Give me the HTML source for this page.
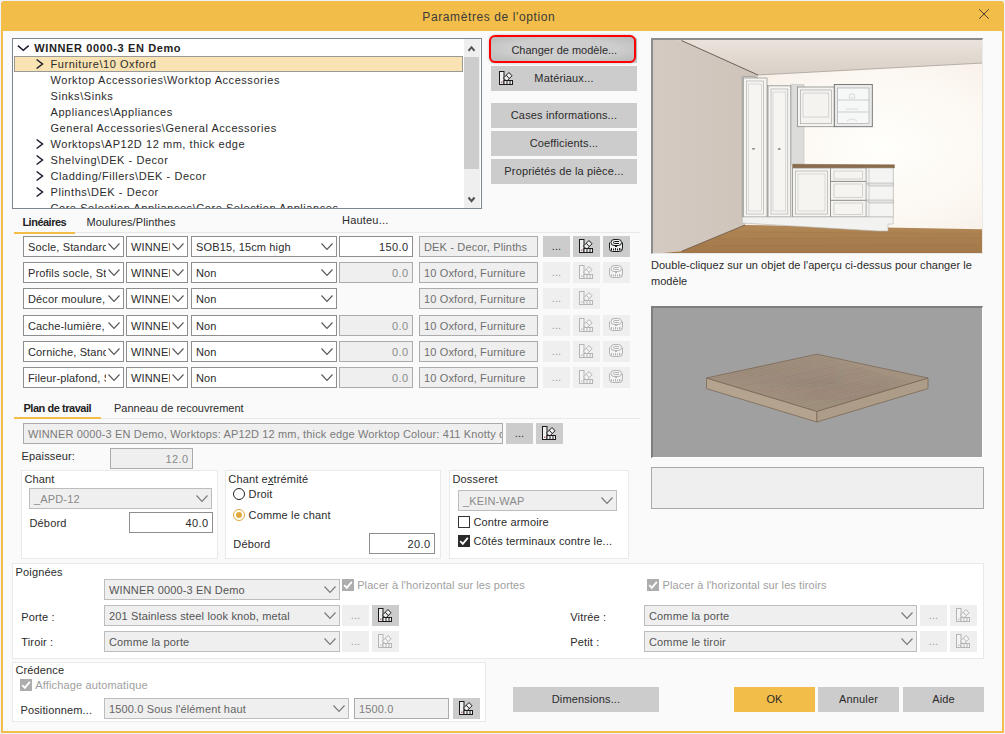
<!DOCTYPE html>
<html><head><meta charset="utf-8"><style>
html,body{margin:0;padding:0;}
body{width:1005px;height:734px;position:relative;overflow:hidden;background:#EFF2FA;font-family:"Liberation Sans",sans-serif;}
.a{position:absolute;box-sizing:border-box;}
.t{position:absolute;white-space:nowrap;}
svg.a{overflow:visible}
</style></head><body>
<div class="a" style="left:1px;top:1px;width:1003px;height:732px;background:#F3BD49;border-radius:3px 3px 0 0;"></div>
<div class="a" style="left:3px;top:31px;width:999px;height:700px;background:#FAFAFA;"></div>
<div class="t" style="left:188.8px;width:600px;text-align:center;top:11.04px;font-size:12px;line-height:12px;color:#3a3a3a;font-weight:400;letter-spacing:0.6px;">Param&egrave;tres de l'option</div>
<svg class="a" style="left:978px;top:8px" width="12" height="12"><path d="M1.2 1.2 L10.8 10.8 M10.8 1.2 L1.2 10.8" stroke="#3b3030" stroke-width="0.9"/></svg>
<div class="a" style="left:12px;top:38px;width:470px;height:171px;background:#FFFFFF;border:1px solid #7D8590;"></div>
<div class="a" style="left:13px;top:39px;width:451px;height:169px;overflow:hidden">
</div>
<div class="a" style="left:14px;top:56px;width:449px;height:16px;background:#FAE3B2;border:1px solid #999999;"></div>
<svg class="a" style="left:17px;top:45px" width="13" height="7"><polyline points="0.9,0.6 6.3,5.2 11.7,0.6" fill="none" stroke="#1c1c2c" stroke-width="1.5"/></svg>
<div class="t" style="left:34.3px;top:43.19px;font-size:11px;line-height:11px;color:#222;font-weight:700;letter-spacing:0.62px;">WINNER 0000-3 EN Demo</div>
<svg class="a" style="left:36px;top:59px" width="9" height="11"><polyline points="0.6,0.5 6.5,5 0.6,9.5" fill="none" stroke="#1c1c2c" stroke-width="1.5"/></svg>
<div class="t" style="left:50.5px;top:59.19px;font-size:11px;line-height:11px;color:#2b2b2b;font-weight:400;letter-spacing:0.55px;">Furniture\10 Oxford</div>
<div class="t" style="left:50.5px;top:75.19px;font-size:11px;line-height:11px;color:#2b2b2b;font-weight:400;letter-spacing:0.55px;">Worktop Accessories\Worktop Accessories</div>
<div class="t" style="left:50.5px;top:91.19px;font-size:11px;line-height:11px;color:#2b2b2b;font-weight:400;letter-spacing:0.55px;">Sinks\Sinks</div>
<div class="t" style="left:50.5px;top:107.19px;font-size:11px;line-height:11px;color:#2b2b2b;font-weight:400;letter-spacing:0.55px;">Appliances\Appliances</div>
<div class="t" style="left:50.5px;top:123.19px;font-size:11px;line-height:11px;color:#2b2b2b;font-weight:400;letter-spacing:0.55px;">General Accessories\General Accessories</div>
<svg class="a" style="left:36px;top:139px" width="9" height="11"><polyline points="0.6,0.5 6.5,5 0.6,9.5" fill="none" stroke="#1c1c2c" stroke-width="1.5"/></svg>
<div class="t" style="left:50.5px;top:139.19px;font-size:11px;line-height:11px;color:#2b2b2b;font-weight:400;letter-spacing:0.55px;">Worktops\AP12D 12 mm, thick edge</div>
<svg class="a" style="left:36px;top:155px" width="9" height="11"><polyline points="0.6,0.5 6.5,5 0.6,9.5" fill="none" stroke="#1c1c2c" stroke-width="1.5"/></svg>
<div class="t" style="left:50.5px;top:155.19px;font-size:11px;line-height:11px;color:#2b2b2b;font-weight:400;letter-spacing:0.55px;">Shelving\DEK - Decor</div>
<svg class="a" style="left:36px;top:171px" width="9" height="11"><polyline points="0.6,0.5 6.5,5 0.6,9.5" fill="none" stroke="#1c1c2c" stroke-width="1.5"/></svg>
<div class="t" style="left:50.5px;top:171.19px;font-size:11px;line-height:11px;color:#2b2b2b;font-weight:400;letter-spacing:0.55px;">Cladding/Fillers\DEK - Decor</div>
<svg class="a" style="left:36px;top:187px" width="9" height="11"><polyline points="0.6,0.5 6.5,5 0.6,9.5" fill="none" stroke="#1c1c2c" stroke-width="1.5"/></svg>
<div class="t" style="left:50.5px;top:187.19px;font-size:11px;line-height:11px;color:#2b2b2b;font-weight:400;letter-spacing:0.55px;">Plinths\DEK - Decor</div>
<div class="a" style="left:13px;top:200px;width:450px;height:8px;overflow:hidden">
<div class="t" style="left:37.5px;top:2.69px;font-size:11px;line-height:11px;letter-spacing:0.55px;color:#2b2b2b">Core Selection Appliances\Core Selection Appliances</div></div>
<div class="a" style="left:464px;top:39px;width:16px;height:169px;background:#EFEFEF;"></div>
<div class="a" style="left:464px;top:57px;width:15px;height:112px;background:#CDCDCD;"></div>
<svg class="a" style="left:467px;top:45px" width="10" height="8"><polyline points="1.5,5.8 4.5,2.2 7.5,5.8" fill="none" stroke="#505050" stroke-width="2"/></svg>
<svg class="a" style="left:467px;top:196px" width="10" height="8"><polyline points="1.5,1.5 4.5,5.1 7.5,1.5" fill="none" stroke="#505050" stroke-width="2"/></svg>
<div class="a" style="left:491px;top:38px;width:146px;height:25px;background:#CCCCCC;"></div>
<div class="a" style="left:489px;top:35px;width:147px;height:28px;box-sizing:border-box;border:2px solid #FF0000;border-radius:6px;background:radial-gradient(ellipse at center,#CDCDCD 55%,#B9B9B9 100%);box-shadow:0 0 3px rgba(0,0,0,0.25)"></div>
<div class="t" style="left:264.29999999999995px;width:600px;text-align:center;top:45.49px;font-size:11px;line-height:11px;color:#2b2b2b;font-weight:400;">Changer de mod&egrave;le...</div>
<div class="a" style="left:491px;top:66px;width:146px;height:25px;background:#CCCCCC;"></div>
<div class="t" style="left:264.0px;width:600px;text-align:center;top:72.69px;font-size:11px;line-height:11px;color:#2b2b2b;font-weight:400;letter-spacing:0.15px;"></div>
<svg class="a" style="left:499px;top:71px" width="14" height="14" viewBox="0 0 14 14">
<rect x="0.5" y="0.5" width="4.5" height="13" fill="#eef0f2" stroke="#1a1a1a"/>
<rect x="2.2" y="10.6" width="1.2" height="1.2" fill="#a03030"/>
<polygon points="10,1.5 13,4.8 7.5,10.3 4.5,7" fill="#eef0f2" stroke="#1a1a1a"/>
<line x1="7.25" y1="4.25" x2="10.25" y2="7.55" stroke="#1a1a1a"/>
<rect x="5" y="9.5" width="8.5" height="4" fill="#eef0f2" stroke="#1a1a1a"/>
<line x1="8" y1="9.5" x2="8" y2="13.5" stroke="#1a1a1a"/>
<line x1="11" y1="9.5" x2="11" y2="13.5" stroke="#1a1a1a"/>
</svg>
<div class="t" style="left:264px;width:600px;text-align:center;top:73.19px;font-size:11px;line-height:11px;color:#2b2b2b;font-weight:400;letter-spacing:0.15px;">Mat&eacute;riaux...</div>
<div class="a" style="left:491px;top:103px;width:146px;height:25px;background:#CCCCCC;"></div>
<div class="t" style="left:264.0px;width:600px;text-align:center;top:109.69px;font-size:11px;line-height:11px;color:#2b2b2b;font-weight:400;letter-spacing:0.15px;">Cases informations...</div>
<div class="a" style="left:491px;top:131px;width:146px;height:25px;background:#CCCCCC;"></div>
<div class="t" style="left:264.0px;width:600px;text-align:center;top:137.69px;font-size:11px;line-height:11px;color:#2b2b2b;font-weight:400;letter-spacing:0.15px;">Coefficients...</div>
<div class="a" style="left:491px;top:159px;width:146px;height:25px;background:#CCCCCC;"></div>
<div class="t" style="left:264.0px;width:600px;text-align:center;top:165.69px;font-size:11px;line-height:11px;color:#2b2b2b;font-weight:400;letter-spacing:0.15px;">Propri&eacute;t&eacute;s de la pi&egrave;ce...</div>
<svg class="a" style="left:651px;top:38px" width="332" height="216" viewBox="0 0 332 216">
<defs>
<linearGradient id="lw" x1="0" y1="0" x2="1" y2="0"><stop offset="0" stop-color="#D3CAC2"/><stop offset="1" stop-color="#CFC4BA"/></linearGradient>
<radialGradient id="bw" cx="0.7" cy="0.5" r="0.7"><stop offset="0" stop-color="#FFFFFB"/><stop offset="0.5" stop-color="#FCF7F1"/><stop offset="1" stop-color="#F2E8DF"/></radialGradient>
<linearGradient id="cl" x1="0" y1="0" x2="0" y2="1"><stop offset="0" stop-color="#ECE4DC"/><stop offset="1" stop-color="#D8CFC7"/></linearGradient>
<linearGradient id="fl" x1="0" y1="0" x2="0" y2="1"><stop offset="0" stop-color="#B18755"/><stop offset="1" stop-color="#A27749"/></linearGradient>
</defs>
<rect x="0" y="0" width="332" height="216" fill="url(#bw)"/>
<polygon points="0,0 332,0 332,25 107,37" fill="url(#cl)"/>
<polygon points="0,0 30.5,2.5 107,37 94,187 30.5,213.3 0,216" fill="url(#lw)"/>
<line x1="30.5" y1="2.5" x2="107" y2="37" stroke="#5e544f" stroke-width="0.9"/>
<line x1="107" y1="37" x2="332" y2="25" stroke="#a89f98" stroke-width="0.8"/>
<polygon points="0,216 30.5,213.3 94,187 330,191.3 332,191.3 332,216" fill="url(#fl)"/>
<path d="M62 201 L330 200 M45 208 L330 207 M80 194 L330 196" stroke="#9a6f45" stroke-width="0.5" opacity="0.5"/>
<line x1="30.5" y1="213.3" x2="94" y2="187" stroke="#6f5a48" stroke-width="0.9"/>
<!-- side panel -->
<polygon points="139.8,46.5 153,46.5 153,126.3 139.8,126.3" fill="#DCDCDA" stroke="#b9b9b7" stroke-width="0.5"/>
<!-- tall units -->
<polygon points="91.3,38.7 103,38.7 117,47.8 117,179 91.3,179" fill="#F6F5F2" stroke="#8d8d8b" stroke-width="0.8"/>
<rect x="92.5" y="40" width="23.5" height="139" fill="#F6F5F2" stroke="#8d8d8b" stroke-width="0.7"/>
<rect x="95.5" y="43" width="17" height="133" fill="none" stroke="#a5a5a3" stroke-width="0.6"/>
<rect x="97.5" y="46" width="13" height="127" fill="none" stroke="#bdbdbb" stroke-width="0.5"/>
<rect x="117" y="47.8" width="22.8" height="131.2" fill="#F6F5F2" stroke="#8d8d8b" stroke-width="0.8"/>
<rect x="120" y="51" width="16.8" height="125" fill="none" stroke="#a5a5a3" stroke-width="0.6"/>
<rect x="122" y="54" width="12.8" height="119" fill="none" stroke="#bdbdbb" stroke-width="0.5"/>
<rect x="101" y="110" width="3" height="1.6" fill="#9a9a98"/>
<rect x="127" y="110" width="2.5" height="2" fill="#9a9a98"/>
<!-- wall units -->
<rect x="146.5" y="49" width="36.8" height="39.7" fill="#F4F3F0" stroke="#8a8a88" stroke-width="0.8"/>
<rect x="149.5" y="52" width="30.8" height="33.7" fill="none" stroke="#9d9d9b" stroke-width="0.6"/>
<rect x="152" y="55" width="25.8" height="24" fill="none" stroke="#b5b5b3" stroke-width="0.5"/>
<rect x="183.3" y="46.5" width="38" height="42.2" fill="#EAEBEB" stroke="#6e6e6e" stroke-width="0.9"/>
<rect x="186.5" y="50" width="31.5" height="35.5" fill="#F6F7F7" stroke="#a0a0a0" stroke-width="0.6"/>
<line x1="187" y1="62" x2="218" y2="62" stroke="#b8b8b8" stroke-width="0.7"/>
<line x1="187" y1="74" x2="218" y2="74" stroke="#b8b8b8" stroke-width="0.7"/>
<path d="M198 60 L204 60 L203 56 L199 56 Z M195 71 L207 71 M196 83 Q201 79 206 83" fill="none" stroke="#c8c8c8" stroke-width="0.6"/>
<!-- worktop -->
<polygon points="141.6,126.3 243.4,126.8 243.4,130 141.6,130" fill="#8E6C4A" stroke="#6d5238" stroke-width="0.4"/>
<!-- base units -->
<rect x="141.6" y="130" width="38" height="49" fill="#F5F4F1" stroke="#8a8a88" stroke-width="0.8"/>
<rect x="144.5" y="133" width="32" height="43" fill="none" stroke="#a0a09e" stroke-width="0.6"/>
<rect x="147" y="136" width="27" height="37" fill="none" stroke="#bdbdbb" stroke-width="0.5"/>
<rect x="179.6" y="130" width="35.6" height="49" fill="#F5F4F1" stroke="#8a8a88" stroke-width="0.8"/>
<line x1="179.6" y1="143.4" x2="215.2" y2="143.4" stroke="#8a8a88" stroke-width="1"/>
<line x1="179.6" y1="162.3" x2="215.2" y2="162.3" stroke="#8a8a88" stroke-width="1"/>
<rect x="183" y="133" width="28.5" height="8" fill="none" stroke="#b0b0ae" stroke-width="0.5"/>
<rect x="183" y="146" width="28.5" height="13.5" fill="none" stroke="#b0b0ae" stroke-width="0.5"/>
<rect x="183" y="165" width="28.5" height="11.5" fill="none" stroke="#b0b0ae" stroke-width="0.5"/>
<rect x="215.2" y="130" width="27" height="49" fill="#F4F4F2" stroke="#a5a5a3" stroke-width="0.6"/>
<polygon points="215.2,145 242.2,145 242.2,148 218,148" fill="#E4E4E2" stroke="#a5a5a3" stroke-width="0.5"/>
<polygon points="215.2,162 242.2,162 242.2,165 218,165" fill="#E4E4E2" stroke="#a5a5a3" stroke-width="0.5"/>
<line x1="218" y1="130" x2="218" y2="179" stroke="#b5b5b3" stroke-width="0.6"/>
<!-- plinth -->
<polygon points="91.3,179 242.2,179 242.2,186 237,186 237,193 227,193 91.3,185" fill="#F2F2F0" stroke="#b5b5b3" stroke-width="0.6"/>
</svg>
<div class="a" style="left:651px;top:38px;width:332px;height:216px;box-sizing:border-box;border-top:2px solid #8C8C8C;border-left:2px solid #8C8C8C;border-right:1px solid #E8E8E8;border-bottom:1px solid #E8E8E8;"></div>
<div class="t" style="left:651px;top:260.19px;font-size:11px;line-height:11px;color:#2b2b2b;font-weight:400;letter-spacing:0.03px;">Double-cliquez sur un objet de l'aper&ccedil;u ci-dessus pour changer le</div>
<div class="t" style="left:651px;top:275.79px;font-size:11px;line-height:11px;color:#2b2b2b;font-weight:400;letter-spacing:0.03px;">mod&egrave;le</div>
<div class="a" style="left:651px;top:306px;width:332px;height:152px;background:#A0A0A0;box-sizing:border-box;border-top:2px solid #7E7E7E;border-left:2px solid #7E7E7E;border-right:1px solid #FFFFFF;border-bottom:1px solid #FFFFFF;"></div>
<svg class="a" style="left:651px;top:306px" width="332" height="152" viewBox="651 306 332 152">
<defs><clipPath id="tp"><polygon points="706.5,378 816.9,354.2 928,378 816.9,411.3"/></clipPath></defs>
<polygon points="706.5,388.6 816.9,422 816.9,411.3 706.5,378" fill="#B4A38E" stroke="#7c6a58" stroke-width="0.8"/>
<polygon points="816.9,422 928,388.6 928,378 816.9,411.3" fill="#AD9C88" stroke="#7c6a58" stroke-width="0.8"/>
<polygon points="706.5,378 816.9,354.2 928,378 816.9,411.3" fill="#A39280" stroke="#7c6a58" stroke-width="0.8"/>
<g clip-path="url(#tp)"><line x1="706.5" y1="378.0" x2="818.0" y2="354.3" stroke="#7f6d5a" stroke-width="0.6" opacity="0.21"/>
<line x1="710.9" y1="379.3" x2="822.4" y2="355.6" stroke="#7f6d5a" stroke-width="0.6" opacity="0.29"/>
<line x1="715.3" y1="380.7" x2="826.8" y2="357.0" stroke="#7f6d5a" stroke-width="0.6" opacity="0.24"/>
<line x1="719.7" y1="382.0" x2="831.2" y2="358.3" stroke="#7f6d5a" stroke-width="0.6" opacity="0.30"/>
<line x1="724.2" y1="383.3" x2="835.7" y2="359.6" stroke="#7f6d5a" stroke-width="0.6" opacity="0.31"/>
<line x1="728.6" y1="384.7" x2="840.1" y2="361.0" stroke="#7f6d5a" stroke-width="0.6" opacity="0.17"/>
<line x1="733.0" y1="386.0" x2="844.5" y2="362.3" stroke="#7f6d5a" stroke-width="0.6" opacity="0.15"/>
<line x1="737.4" y1="387.3" x2="848.9" y2="363.6" stroke="#7f6d5a" stroke-width="0.6" opacity="0.36"/>
<line x1="741.8" y1="388.7" x2="853.3" y2="365.0" stroke="#7f6d5a" stroke-width="0.6" opacity="0.21"/>
<line x1="746.2" y1="390.0" x2="857.7" y2="366.3" stroke="#7f6d5a" stroke-width="0.6" opacity="0.21"/>
<line x1="750.7" y1="391.3" x2="862.2" y2="367.6" stroke="#7f6d5a" stroke-width="0.6" opacity="0.40"/>
<line x1="755.1" y1="392.7" x2="866.6" y2="369.0" stroke="#7f6d5a" stroke-width="0.6" opacity="0.27"/>
<line x1="759.5" y1="394.0" x2="871.0" y2="370.3" stroke="#7f6d5a" stroke-width="0.6" opacity="0.36"/>
<line x1="763.9" y1="395.3" x2="875.4" y2="371.6" stroke="#7f6d5a" stroke-width="0.6" opacity="0.27"/>
<line x1="768.3" y1="396.6" x2="879.8" y2="372.9" stroke="#7f6d5a" stroke-width="0.6" opacity="0.31"/>
<line x1="772.7" y1="398.0" x2="884.2" y2="374.3" stroke="#7f6d5a" stroke-width="0.6" opacity="0.19"/>
<line x1="777.2" y1="399.3" x2="888.7" y2="375.6" stroke="#7f6d5a" stroke-width="0.6" opacity="0.31"/>
<line x1="781.6" y1="400.6" x2="893.1" y2="376.9" stroke="#7f6d5a" stroke-width="0.6" opacity="0.37"/>
<line x1="786.0" y1="402.0" x2="897.5" y2="378.3" stroke="#7f6d5a" stroke-width="0.6" opacity="0.28"/>
<line x1="790.4" y1="403.3" x2="901.9" y2="379.6" stroke="#7f6d5a" stroke-width="0.6" opacity="0.34"/>
<line x1="794.8" y1="404.6" x2="906.3" y2="380.9" stroke="#7f6d5a" stroke-width="0.6" opacity="0.32"/>
<line x1="799.2" y1="406.0" x2="910.7" y2="382.3" stroke="#7f6d5a" stroke-width="0.6" opacity="0.17"/>
<line x1="803.7" y1="407.3" x2="915.2" y2="383.6" stroke="#7f6d5a" stroke-width="0.6" opacity="0.34"/>
<line x1="808.1" y1="408.6" x2="919.6" y2="384.9" stroke="#7f6d5a" stroke-width="0.6" opacity="0.30"/>
<line x1="812.5" y1="410.0" x2="924.0" y2="386.3" stroke="#7f6d5a" stroke-width="0.6" opacity="0.23"/>
<line x1="816.9" y1="411.3" x2="928.4" y2="387.6" stroke="#7f6d5a" stroke-width="0.6" opacity="0.16"/></g>
</svg>
<div class="a" style="left:651px;top:467px;width:333px;height:42px;background:#EFEFEF;border:1px solid #A8A8A8;"></div>
<div class="a" style="left:14px;top:232px;width:626px;height:1px;background:#E8E8E8;"></div>
<div class="t" style="left:22.4px;top:217.09px;font-size:11px;line-height:11px;color:#222;font-weight:700;letter-spacing:-0.5px;">Lin&eacute;aires</div>
<div class="t" style="left:86.5px;top:217.09px;font-size:11px;line-height:11px;color:#2b2b2b;font-weight:400;letter-spacing:0.1px;">Moulures/Plinthes</div>
<div class="a" style="left:14px;top:232px;width:61px;height:2px;background:#F3BD49;"></div>
<div class="t" style="left:342px;top:215.19px;font-size:11px;line-height:11px;color:#2b2b2b;font-weight:400;letter-spacing:0.2px;">Hauteu...</div>
<div class="a" style="left:23px;top:236px;width:101px;height:21px;background:#FFFFFF;border:1px solid #8E8E8E;"></div>
<div class="a" style="left:24px;top:237px;width:82px;height:19px;overflow:hidden">
<div class="t" style="left:4px;top:5.19px;font-size:11px;line-height:11px;letter-spacing:0.15px;color:#2b2b2b">Socle, Standard</div></div>
<svg class="a" style="left:108px;top:243px" width="12" height="7.4"><polyline points="0.5,0.5 6.0,6.4 11.5,0.5" fill="none" stroke="#555" stroke-width="1.1"/></svg>
<div class="a" style="left:126px;top:236px;width:62px;height:21px;background:#FFFFFF;border:1px solid #8E8E8E;"></div>
<div class="a" style="left:127px;top:237px;width:43px;height:19px;overflow:hidden">
<div class="t" style="left:4px;top:5.19px;font-size:11px;line-height:11px;letter-spacing:0.15px;color:#2b2b2b">WINNER 0000-3</div></div>
<svg class="a" style="left:172px;top:243px" width="12" height="7.4"><polyline points="0.5,0.5 6.0,6.4 11.5,0.5" fill="none" stroke="#555" stroke-width="1.1"/></svg>
<div class="a" style="left:191px;top:236px;width:146px;height:21px;background:#FFFFFF;border:1px solid #8E8E8E;"></div>
<div class="a" style="left:192px;top:237px;width:127px;height:19px;overflow:hidden">
<div class="t" style="left:4px;top:5.19px;font-size:11px;line-height:11px;letter-spacing:0.15px;color:#2b2b2b">SOB15, 15cm high</div></div>
<svg class="a" style="left:321px;top:243px" width="12" height="7.4"><polyline points="0.5,0.5 6.0,6.4 11.5,0.5" fill="none" stroke="#555" stroke-width="1.1"/></svg>
<div class="a" style="left:339px;top:236px;width:74px;height:21px;background:#FFFFFF;border:1px solid #8E8E8E;"></div>
<div class="t" style="right:596.6px;text-align:right;top:241.69px;font-size:11px;line-height:11px;color:#2b2b2b;font-weight:400;letter-spacing:0.4px;">150.0</div>
<div class="a" style="left:419px;top:236px;width:119px;height:21px;background:#EFEFEF;border:1px solid #ABABAB;"></div>
<div class="a" style="left:420px;top:237px;width:117px;height:19px;overflow:hidden">
<div class="t" style="left:4px;top:5.19px;font-size:11px;line-height:11px;letter-spacing:0.15px;color:#6f6f6f">DEK - Decor, Plinths</div></div>
<div class="a" style="left:543px;top:236px;width:27px;height:21px;background:#CCCCCC;"></div>
<div class="t" style="left:256.5px;width:600px;text-align:center;top:240.69px;font-size:11px;line-height:11px;color:#2b2b2b;font-weight:400;letter-spacing:0.15px;">...</div>
<div class="a" style="left:573px;top:236px;width:27px;height:21px;background:#CCCCCC;"></div>
<svg class="a" style="left:579px;top:239px" width="14" height="14" viewBox="0 0 14 14">
<rect x="0.5" y="0.5" width="4.5" height="13" fill="#eef0f2" stroke="#1a1a1a"/>
<rect x="2.2" y="10.6" width="1.2" height="1.2" fill="#a03030"/>
<polygon points="10,1.5 13,4.8 7.5,10.3 4.5,7" fill="#eef0f2" stroke="#1a1a1a"/>
<line x1="7.25" y1="4.25" x2="10.25" y2="7.55" stroke="#1a1a1a"/>
<rect x="5" y="9.5" width="8.5" height="4" fill="#eef0f2" stroke="#1a1a1a"/>
<line x1="8" y1="9.5" x2="8" y2="13.5" stroke="#1a1a1a"/>
<line x1="11" y1="9.5" x2="11" y2="13.5" stroke="#1a1a1a"/>
</svg>
<div class="a" style="left:603px;top:236px;width:27px;height:21px;background:#CCCCCC;"></div>
<svg class="a" style="left:608px;top:238px" width="16" height="14" viewBox="0 0 16 14">
<path d="M1.5 4.5 V10.5 Q1.5 13.5 4.5 13.5 H11.5 Q14.5 13.5 14.5 10.5 V4.5" fill="#eef0f2" stroke="#1a1a1a"/>
<rect x="3" y="1.5" width="10.5" height="6" rx="3" ry="3" fill="#eef0f2" stroke="#1a1a1a"/>
<path d="M11 3.5 H6.5 Q5.5 3.5 5.5 4.5 Q5.5 5.5 6.5 5.5 H11" fill="none" stroke="#1a1a1a"/>
<path d="M6.5 7.5 L8 9 L9.5 7.5" fill="none" stroke="#1a1a1a"/>
<path d="M3.5 10 V12.5 M5.5 10.5 V12.5 M7.5 10 V12.5 M9.5 10.5 V12.5 M11.5 10 V12.5 M13 10.5 V12" stroke="#1a1a1a"/>
</svg>
<div class="a" style="left:23px;top:262px;width:101px;height:21px;background:#FFFFFF;border:1px solid #8E8E8E;"></div>
<div class="a" style="left:24px;top:263px;width:82px;height:19px;overflow:hidden">
<div class="t" style="left:4px;top:5.19px;font-size:11px;line-height:11px;letter-spacing:0.15px;color:#2b2b2b">Profils socle, St</div></div>
<svg class="a" style="left:108px;top:269px" width="12" height="7.4"><polyline points="0.5,0.5 6.0,6.4 11.5,0.5" fill="none" stroke="#555" stroke-width="1.1"/></svg>
<div class="a" style="left:126px;top:262px;width:62px;height:21px;background:#FFFFFF;border:1px solid #8E8E8E;"></div>
<div class="a" style="left:127px;top:263px;width:43px;height:19px;overflow:hidden">
<div class="t" style="left:4px;top:5.19px;font-size:11px;line-height:11px;letter-spacing:0.15px;color:#2b2b2b">WINNER 0000-3</div></div>
<svg class="a" style="left:172px;top:269px" width="12" height="7.4"><polyline points="0.5,0.5 6.0,6.4 11.5,0.5" fill="none" stroke="#555" stroke-width="1.1"/></svg>
<div class="a" style="left:191px;top:262px;width:146px;height:21px;background:#FFFFFF;border:1px solid #8E8E8E;"></div>
<div class="a" style="left:192px;top:263px;width:127px;height:19px;overflow:hidden">
<div class="t" style="left:4px;top:5.19px;font-size:11px;line-height:11px;letter-spacing:0.15px;color:#2b2b2b">Non</div></div>
<svg class="a" style="left:321px;top:269px" width="12" height="7.4"><polyline points="0.5,0.5 6.0,6.4 11.5,0.5" fill="none" stroke="#555" stroke-width="1.1"/></svg>
<div class="a" style="left:339px;top:262px;width:74px;height:21px;background:#EFEFEF;border:1px solid #ABABAB;"></div>
<div class="t" style="right:596.6px;text-align:right;top:267.69px;font-size:11px;line-height:11px;color:#8a8a8a;font-weight:400;letter-spacing:0.4px;">0.0</div>
<div class="a" style="left:419px;top:262px;width:119px;height:21px;background:#EFEFEF;border:1px solid #ABABAB;"></div>
<div class="a" style="left:420px;top:263px;width:117px;height:19px;overflow:hidden">
<div class="t" style="left:4px;top:5.19px;font-size:11px;line-height:11px;letter-spacing:0.15px;color:#6f6f6f">10 Oxford, Furniture</div></div>
<div class="a" style="left:543px;top:262px;width:27px;height:21px;background:#EFEFEF;"></div>
<div class="t" style="left:256.5px;width:600px;text-align:center;top:266.69px;font-size:11px;line-height:11px;color:#9a9a9a;font-weight:400;letter-spacing:0.15px;">...</div>
<div class="a" style="left:573px;top:262px;width:27px;height:21px;background:#EFEFEF;"></div>
<svg class="a" style="left:579px;top:265px" width="14" height="14" viewBox="0 0 14 14">
<rect x="0.5" y="0.5" width="4.5" height="13" fill="#f4f4f4" stroke="#b4b4b4"/>
<rect x="2.2" y="10.6" width="1.2" height="1.2" fill="#c8a0a0"/>
<polygon points="10,1.5 13,4.8 7.5,10.3 4.5,7" fill="#f4f4f4" stroke="#b4b4b4"/>
<line x1="7.25" y1="4.25" x2="10.25" y2="7.55" stroke="#b4b4b4"/>
<rect x="5" y="9.5" width="8.5" height="4" fill="#f4f4f4" stroke="#b4b4b4"/>
<line x1="8" y1="9.5" x2="8" y2="13.5" stroke="#b4b4b4"/>
<line x1="11" y1="9.5" x2="11" y2="13.5" stroke="#b4b4b4"/>
</svg>
<div class="a" style="left:603px;top:262px;width:27px;height:21px;background:#EFEFEF;"></div>
<svg class="a" style="left:608px;top:264px" width="16" height="14" viewBox="0 0 16 14">
<path d="M1.5 4.5 V10.5 Q1.5 13.5 4.5 13.5 H11.5 Q14.5 13.5 14.5 10.5 V4.5" fill="#f4f4f4" stroke="#b4b4b4"/>
<rect x="3" y="1.5" width="10.5" height="6" rx="3" ry="3" fill="#f4f4f4" stroke="#b4b4b4"/>
<path d="M11 3.5 H6.5 Q5.5 3.5 5.5 4.5 Q5.5 5.5 6.5 5.5 H11" fill="none" stroke="#b4b4b4"/>
<path d="M6.5 7.5 L8 9 L9.5 7.5" fill="none" stroke="#b4b4b4"/>
<path d="M3.5 10 V12.5 M5.5 10.5 V12.5 M7.5 10 V12.5 M9.5 10.5 V12.5 M11.5 10 V12.5 M13 10.5 V12" stroke="#b4b4b4"/>
</svg>
<div class="a" style="left:23px;top:288px;width:101px;height:21px;background:#FFFFFF;border:1px solid #8E8E8E;"></div>
<div class="a" style="left:24px;top:289px;width:82px;height:19px;overflow:hidden">
<div class="t" style="left:4px;top:5.19px;font-size:11px;line-height:11px;letter-spacing:0.15px;color:#2b2b2b">D&eacute;cor moulure, Cl</div></div>
<svg class="a" style="left:108px;top:295px" width="12" height="7.4"><polyline points="0.5,0.5 6.0,6.4 11.5,0.5" fill="none" stroke="#555" stroke-width="1.1"/></svg>
<div class="a" style="left:126px;top:288px;width:62px;height:21px;background:#FFFFFF;border:1px solid #8E8E8E;"></div>
<div class="a" style="left:127px;top:289px;width:43px;height:19px;overflow:hidden">
<div class="t" style="left:4px;top:5.19px;font-size:11px;line-height:11px;letter-spacing:0.15px;color:#2b2b2b">WINNER 0000-3</div></div>
<svg class="a" style="left:172px;top:295px" width="12" height="7.4"><polyline points="0.5,0.5 6.0,6.4 11.5,0.5" fill="none" stroke="#555" stroke-width="1.1"/></svg>
<div class="a" style="left:191px;top:288px;width:146px;height:21px;background:#FFFFFF;border:1px solid #8E8E8E;"></div>
<div class="a" style="left:192px;top:289px;width:127px;height:19px;overflow:hidden">
<div class="t" style="left:4px;top:5.19px;font-size:11px;line-height:11px;letter-spacing:0.15px;color:#2b2b2b">Non</div></div>
<svg class="a" style="left:321px;top:295px" width="12" height="7.4"><polyline points="0.5,0.5 6.0,6.4 11.5,0.5" fill="none" stroke="#555" stroke-width="1.1"/></svg>
<div class="a" style="left:419px;top:288px;width:119px;height:21px;background:#EFEFEF;border:1px solid #ABABAB;"></div>
<div class="a" style="left:420px;top:289px;width:117px;height:19px;overflow:hidden">
<div class="t" style="left:4px;top:5.19px;font-size:11px;line-height:11px;letter-spacing:0.15px;color:#6f6f6f">10 Oxford, Furniture</div></div>
<div class="a" style="left:543px;top:288px;width:27px;height:21px;background:#EFEFEF;"></div>
<div class="t" style="left:256.5px;width:600px;text-align:center;top:292.69px;font-size:11px;line-height:11px;color:#9a9a9a;font-weight:400;letter-spacing:0.15px;">...</div>
<div class="a" style="left:573px;top:288px;width:27px;height:21px;background:#EFEFEF;"></div>
<svg class="a" style="left:579px;top:291px" width="14" height="14" viewBox="0 0 14 14">
<rect x="0.5" y="0.5" width="4.5" height="13" fill="#f4f4f4" stroke="#b4b4b4"/>
<rect x="2.2" y="10.6" width="1.2" height="1.2" fill="#c8a0a0"/>
<polygon points="10,1.5 13,4.8 7.5,10.3 4.5,7" fill="#f4f4f4" stroke="#b4b4b4"/>
<line x1="7.25" y1="4.25" x2="10.25" y2="7.55" stroke="#b4b4b4"/>
<rect x="5" y="9.5" width="8.5" height="4" fill="#f4f4f4" stroke="#b4b4b4"/>
<line x1="8" y1="9.5" x2="8" y2="13.5" stroke="#b4b4b4"/>
<line x1="11" y1="9.5" x2="11" y2="13.5" stroke="#b4b4b4"/>
</svg>
<div class="a" style="left:23px;top:315px;width:101px;height:21px;background:#FFFFFF;border:1px solid #8E8E8E;"></div>
<div class="a" style="left:24px;top:316px;width:82px;height:19px;overflow:hidden">
<div class="t" style="left:4px;top:5.19px;font-size:11px;line-height:11px;letter-spacing:0.15px;color:#2b2b2b">Cache-lumi&egrave;re, Standard</div></div>
<svg class="a" style="left:108px;top:322px" width="12" height="7.4"><polyline points="0.5,0.5 6.0,6.4 11.5,0.5" fill="none" stroke="#555" stroke-width="1.1"/></svg>
<div class="a" style="left:126px;top:315px;width:62px;height:21px;background:#FFFFFF;border:1px solid #8E8E8E;"></div>
<div class="a" style="left:127px;top:316px;width:43px;height:19px;overflow:hidden">
<div class="t" style="left:4px;top:5.19px;font-size:11px;line-height:11px;letter-spacing:0.15px;color:#2b2b2b">WINNER 0000-3</div></div>
<svg class="a" style="left:172px;top:322px" width="12" height="7.4"><polyline points="0.5,0.5 6.0,6.4 11.5,0.5" fill="none" stroke="#555" stroke-width="1.1"/></svg>
<div class="a" style="left:191px;top:315px;width:146px;height:21px;background:#FFFFFF;border:1px solid #8E8E8E;"></div>
<div class="a" style="left:192px;top:316px;width:127px;height:19px;overflow:hidden">
<div class="t" style="left:4px;top:5.19px;font-size:11px;line-height:11px;letter-spacing:0.15px;color:#2b2b2b">Non</div></div>
<svg class="a" style="left:321px;top:322px" width="12" height="7.4"><polyline points="0.5,0.5 6.0,6.4 11.5,0.5" fill="none" stroke="#555" stroke-width="1.1"/></svg>
<div class="a" style="left:339px;top:315px;width:74px;height:21px;background:#EFEFEF;border:1px solid #ABABAB;"></div>
<div class="t" style="right:596.6px;text-align:right;top:320.69px;font-size:11px;line-height:11px;color:#8a8a8a;font-weight:400;letter-spacing:0.4px;">0.0</div>
<div class="a" style="left:419px;top:315px;width:119px;height:21px;background:#EFEFEF;border:1px solid #ABABAB;"></div>
<div class="a" style="left:420px;top:316px;width:117px;height:19px;overflow:hidden">
<div class="t" style="left:4px;top:5.19px;font-size:11px;line-height:11px;letter-spacing:0.15px;color:#6f6f6f">10 Oxford, Furniture</div></div>
<div class="a" style="left:543px;top:315px;width:27px;height:21px;background:#EFEFEF;"></div>
<div class="t" style="left:256.5px;width:600px;text-align:center;top:319.69px;font-size:11px;line-height:11px;color:#9a9a9a;font-weight:400;letter-spacing:0.15px;">...</div>
<div class="a" style="left:573px;top:315px;width:27px;height:21px;background:#EFEFEF;"></div>
<svg class="a" style="left:579px;top:318px" width="14" height="14" viewBox="0 0 14 14">
<rect x="0.5" y="0.5" width="4.5" height="13" fill="#f4f4f4" stroke="#b4b4b4"/>
<rect x="2.2" y="10.6" width="1.2" height="1.2" fill="#c8a0a0"/>
<polygon points="10,1.5 13,4.8 7.5,10.3 4.5,7" fill="#f4f4f4" stroke="#b4b4b4"/>
<line x1="7.25" y1="4.25" x2="10.25" y2="7.55" stroke="#b4b4b4"/>
<rect x="5" y="9.5" width="8.5" height="4" fill="#f4f4f4" stroke="#b4b4b4"/>
<line x1="8" y1="9.5" x2="8" y2="13.5" stroke="#b4b4b4"/>
<line x1="11" y1="9.5" x2="11" y2="13.5" stroke="#b4b4b4"/>
</svg>
<div class="a" style="left:603px;top:315px;width:27px;height:21px;background:#EFEFEF;"></div>
<svg class="a" style="left:608px;top:317px" width="16" height="14" viewBox="0 0 16 14">
<path d="M1.5 4.5 V10.5 Q1.5 13.5 4.5 13.5 H11.5 Q14.5 13.5 14.5 10.5 V4.5" fill="#f4f4f4" stroke="#b4b4b4"/>
<rect x="3" y="1.5" width="10.5" height="6" rx="3" ry="3" fill="#f4f4f4" stroke="#b4b4b4"/>
<path d="M11 3.5 H6.5 Q5.5 3.5 5.5 4.5 Q5.5 5.5 6.5 5.5 H11" fill="none" stroke="#b4b4b4"/>
<path d="M6.5 7.5 L8 9 L9.5 7.5" fill="none" stroke="#b4b4b4"/>
<path d="M3.5 10 V12.5 M5.5 10.5 V12.5 M7.5 10 V12.5 M9.5 10.5 V12.5 M11.5 10 V12.5 M13 10.5 V12" stroke="#b4b4b4"/>
</svg>
<div class="a" style="left:23px;top:341px;width:101px;height:21px;background:#FFFFFF;border:1px solid #8E8E8E;"></div>
<div class="a" style="left:24px;top:342px;width:82px;height:19px;overflow:hidden">
<div class="t" style="left:4px;top:5.19px;font-size:11px;line-height:11px;letter-spacing:0.15px;color:#2b2b2b">Corniche, Standard</div></div>
<svg class="a" style="left:108px;top:348px" width="12" height="7.4"><polyline points="0.5,0.5 6.0,6.4 11.5,0.5" fill="none" stroke="#555" stroke-width="1.1"/></svg>
<div class="a" style="left:126px;top:341px;width:62px;height:21px;background:#FFFFFF;border:1px solid #8E8E8E;"></div>
<div class="a" style="left:127px;top:342px;width:43px;height:19px;overflow:hidden">
<div class="t" style="left:4px;top:5.19px;font-size:11px;line-height:11px;letter-spacing:0.15px;color:#2b2b2b">WINNER 0000-3</div></div>
<svg class="a" style="left:172px;top:348px" width="12" height="7.4"><polyline points="0.5,0.5 6.0,6.4 11.5,0.5" fill="none" stroke="#555" stroke-width="1.1"/></svg>
<div class="a" style="left:191px;top:341px;width:146px;height:21px;background:#FFFFFF;border:1px solid #8E8E8E;"></div>
<div class="a" style="left:192px;top:342px;width:127px;height:19px;overflow:hidden">
<div class="t" style="left:4px;top:5.19px;font-size:11px;line-height:11px;letter-spacing:0.15px;color:#2b2b2b">Non</div></div>
<svg class="a" style="left:321px;top:348px" width="12" height="7.4"><polyline points="0.5,0.5 6.0,6.4 11.5,0.5" fill="none" stroke="#555" stroke-width="1.1"/></svg>
<div class="a" style="left:339px;top:341px;width:74px;height:21px;background:#EFEFEF;border:1px solid #ABABAB;"></div>
<div class="t" style="right:596.6px;text-align:right;top:346.69px;font-size:11px;line-height:11px;color:#8a8a8a;font-weight:400;letter-spacing:0.4px;">0.0</div>
<div class="a" style="left:419px;top:341px;width:119px;height:21px;background:#EFEFEF;border:1px solid #ABABAB;"></div>
<div class="a" style="left:420px;top:342px;width:117px;height:19px;overflow:hidden">
<div class="t" style="left:4px;top:5.19px;font-size:11px;line-height:11px;letter-spacing:0.15px;color:#6f6f6f">10 Oxford, Furniture</div></div>
<div class="a" style="left:543px;top:341px;width:27px;height:21px;background:#EFEFEF;"></div>
<div class="t" style="left:256.5px;width:600px;text-align:center;top:345.69px;font-size:11px;line-height:11px;color:#9a9a9a;font-weight:400;letter-spacing:0.15px;">...</div>
<div class="a" style="left:573px;top:341px;width:27px;height:21px;background:#EFEFEF;"></div>
<svg class="a" style="left:579px;top:344px" width="14" height="14" viewBox="0 0 14 14">
<rect x="0.5" y="0.5" width="4.5" height="13" fill="#f4f4f4" stroke="#b4b4b4"/>
<rect x="2.2" y="10.6" width="1.2" height="1.2" fill="#c8a0a0"/>
<polygon points="10,1.5 13,4.8 7.5,10.3 4.5,7" fill="#f4f4f4" stroke="#b4b4b4"/>
<line x1="7.25" y1="4.25" x2="10.25" y2="7.55" stroke="#b4b4b4"/>
<rect x="5" y="9.5" width="8.5" height="4" fill="#f4f4f4" stroke="#b4b4b4"/>
<line x1="8" y1="9.5" x2="8" y2="13.5" stroke="#b4b4b4"/>
<line x1="11" y1="9.5" x2="11" y2="13.5" stroke="#b4b4b4"/>
</svg>
<div class="a" style="left:603px;top:341px;width:27px;height:21px;background:#EFEFEF;"></div>
<svg class="a" style="left:608px;top:343px" width="16" height="14" viewBox="0 0 16 14">
<path d="M1.5 4.5 V10.5 Q1.5 13.5 4.5 13.5 H11.5 Q14.5 13.5 14.5 10.5 V4.5" fill="#f4f4f4" stroke="#b4b4b4"/>
<rect x="3" y="1.5" width="10.5" height="6" rx="3" ry="3" fill="#f4f4f4" stroke="#b4b4b4"/>
<path d="M11 3.5 H6.5 Q5.5 3.5 5.5 4.5 Q5.5 5.5 6.5 5.5 H11" fill="none" stroke="#b4b4b4"/>
<path d="M6.5 7.5 L8 9 L9.5 7.5" fill="none" stroke="#b4b4b4"/>
<path d="M3.5 10 V12.5 M5.5 10.5 V12.5 M7.5 10 V12.5 M9.5 10.5 V12.5 M11.5 10 V12.5 M13 10.5 V12" stroke="#b4b4b4"/>
</svg>
<div class="a" style="left:23px;top:367px;width:101px;height:21px;background:#FFFFFF;border:1px solid #8E8E8E;"></div>
<div class="a" style="left:24px;top:368px;width:82px;height:19px;overflow:hidden">
<div class="t" style="left:4px;top:5.19px;font-size:11px;line-height:11px;letter-spacing:0.15px;color:#2b2b2b">Fileur-plafond, Standard</div></div>
<svg class="a" style="left:108px;top:374px" width="12" height="7.4"><polyline points="0.5,0.5 6.0,6.4 11.5,0.5" fill="none" stroke="#555" stroke-width="1.1"/></svg>
<div class="a" style="left:126px;top:367px;width:62px;height:21px;background:#FFFFFF;border:1px solid #8E8E8E;"></div>
<div class="a" style="left:127px;top:368px;width:43px;height:19px;overflow:hidden">
<div class="t" style="left:4px;top:5.19px;font-size:11px;line-height:11px;letter-spacing:0.15px;color:#2b2b2b">WINNER 0000-3</div></div>
<svg class="a" style="left:172px;top:374px" width="12" height="7.4"><polyline points="0.5,0.5 6.0,6.4 11.5,0.5" fill="none" stroke="#555" stroke-width="1.1"/></svg>
<div class="a" style="left:191px;top:367px;width:146px;height:21px;background:#FFFFFF;border:1px solid #8E8E8E;"></div>
<div class="a" style="left:192px;top:368px;width:127px;height:19px;overflow:hidden">
<div class="t" style="left:4px;top:5.19px;font-size:11px;line-height:11px;letter-spacing:0.15px;color:#2b2b2b">Non</div></div>
<svg class="a" style="left:321px;top:374px" width="12" height="7.4"><polyline points="0.5,0.5 6.0,6.4 11.5,0.5" fill="none" stroke="#555" stroke-width="1.1"/></svg>
<div class="a" style="left:339px;top:367px;width:74px;height:21px;background:#EFEFEF;border:1px solid #ABABAB;"></div>
<div class="t" style="right:596.6px;text-align:right;top:372.69px;font-size:11px;line-height:11px;color:#8a8a8a;font-weight:400;letter-spacing:0.4px;">0.0</div>
<div class="a" style="left:419px;top:367px;width:119px;height:21px;background:#EFEFEF;border:1px solid #ABABAB;"></div>
<div class="a" style="left:420px;top:368px;width:117px;height:19px;overflow:hidden">
<div class="t" style="left:4px;top:5.19px;font-size:11px;line-height:11px;letter-spacing:0.15px;color:#6f6f6f">10 Oxford, Furniture</div></div>
<div class="a" style="left:543px;top:367px;width:27px;height:21px;background:#EFEFEF;"></div>
<div class="t" style="left:256.5px;width:600px;text-align:center;top:371.69px;font-size:11px;line-height:11px;color:#9a9a9a;font-weight:400;letter-spacing:0.15px;">...</div>
<div class="a" style="left:573px;top:367px;width:27px;height:21px;background:#EFEFEF;"></div>
<svg class="a" style="left:579px;top:370px" width="14" height="14" viewBox="0 0 14 14">
<rect x="0.5" y="0.5" width="4.5" height="13" fill="#f4f4f4" stroke="#b4b4b4"/>
<rect x="2.2" y="10.6" width="1.2" height="1.2" fill="#c8a0a0"/>
<polygon points="10,1.5 13,4.8 7.5,10.3 4.5,7" fill="#f4f4f4" stroke="#b4b4b4"/>
<line x1="7.25" y1="4.25" x2="10.25" y2="7.55" stroke="#b4b4b4"/>
<rect x="5" y="9.5" width="8.5" height="4" fill="#f4f4f4" stroke="#b4b4b4"/>
<line x1="8" y1="9.5" x2="8" y2="13.5" stroke="#b4b4b4"/>
<line x1="11" y1="9.5" x2="11" y2="13.5" stroke="#b4b4b4"/>
</svg>
<div class="a" style="left:603px;top:367px;width:27px;height:21px;background:#EFEFEF;"></div>
<svg class="a" style="left:608px;top:369px" width="16" height="14" viewBox="0 0 16 14">
<path d="M1.5 4.5 V10.5 Q1.5 13.5 4.5 13.5 H11.5 Q14.5 13.5 14.5 10.5 V4.5" fill="#f4f4f4" stroke="#b4b4b4"/>
<rect x="3" y="1.5" width="10.5" height="6" rx="3" ry="3" fill="#f4f4f4" stroke="#b4b4b4"/>
<path d="M11 3.5 H6.5 Q5.5 3.5 5.5 4.5 Q5.5 5.5 6.5 5.5 H11" fill="none" stroke="#b4b4b4"/>
<path d="M6.5 7.5 L8 9 L9.5 7.5" fill="none" stroke="#b4b4b4"/>
<path d="M3.5 10 V12.5 M5.5 10.5 V12.5 M7.5 10 V12.5 M9.5 10.5 V12.5 M11.5 10 V12.5 M13 10.5 V12" stroke="#b4b4b4"/>
</svg>
<div class="a" style="left:14px;top:418px;width:626px;height:1px;background:#E8E8E8;"></div>
<div class="t" style="left:23.4px;top:402.89px;font-size:11px;line-height:11px;color:#222;font-weight:700;letter-spacing:-0.45px;">Plan de travail</div>
<div class="t" style="left:114px;top:402.89px;font-size:11px;line-height:11px;color:#2b2b2b;font-weight:400;">Panneau de recouvrement</div>
<div class="a" style="left:14px;top:417px;width:87px;height:2px;background:#F3BD49;"></div>
<div class="a" style="left:23px;top:423px;width:480px;height:21px;background:#EFEFEF;border:1px solid #ABABAB;"></div>
<div class="a" style="left:24px;top:424px;width:478px;height:19px;overflow:hidden">
<div class="t" style="left:4px;top:5.19px;font-size:11px;line-height:11px;letter-spacing:0.15px;color:#7a7a7a">WINNER 0000-3 EN Demo, Worktops: AP12D 12 mm, thick edge Worktop Colour: 411 Knotty oak</div></div>
<div class="a" style="left:506px;top:423px;width:27px;height:21px;background:#CCCCCC;"></div>
<div class="t" style="left:219.5px;width:600px;text-align:center;top:427.69px;font-size:11px;line-height:11px;color:#2b2b2b;font-weight:400;letter-spacing:0.15px;">...</div>
<div class="a" style="left:536px;top:423px;width:27px;height:21px;background:#CCCCCC;"></div>
<svg class="a" style="left:542px;top:426px" width="14" height="14" viewBox="0 0 14 14">
<rect x="0.5" y="0.5" width="4.5" height="13" fill="#eef0f2" stroke="#1a1a1a"/>
<rect x="2.2" y="10.6" width="1.2" height="1.2" fill="#a03030"/>
<polygon points="10,1.5 13,4.8 7.5,10.3 4.5,7" fill="#eef0f2" stroke="#1a1a1a"/>
<line x1="7.25" y1="4.25" x2="10.25" y2="7.55" stroke="#1a1a1a"/>
<rect x="5" y="9.5" width="8.5" height="4" fill="#eef0f2" stroke="#1a1a1a"/>
<line x1="8" y1="9.5" x2="8" y2="13.5" stroke="#1a1a1a"/>
<line x1="11" y1="9.5" x2="11" y2="13.5" stroke="#1a1a1a"/>
</svg>
<div class="t" style="left:21.6px;top:450.69px;font-size:11px;line-height:11px;color:#2b2b2b;font-weight:400;letter-spacing:0.15px;">Epaisseur:</div>
<div class="a" style="left:110px;top:448px;width:83px;height:21px;background:#EFEFEF;border:1px solid #ABABAB;"></div>
<div class="t" style="right:816.6px;text-align:right;top:453.69px;font-size:11px;line-height:11px;color:#8a8a8a;font-weight:400;letter-spacing:0.4px;">12.0</div>
<div class="a" style="left:21px;top:470px;width:197px;height:89px;background:#FFFFFF;border:1px solid #E9E9E9;"></div>
<div class="t" style="left:24.4px;top:473.99px;font-size:11px;line-height:11px;color:#2b2b2b;font-weight:400;letter-spacing:0.15px;">Chant</div>
<div class="a" style="left:29px;top:488px;width:183px;height:21px;background:#EFEFEF;border:1px solid #BDBDBD;"></div>
<div class="a" style="left:30px;top:489px;width:164px;height:19px;overflow:hidden">
<div class="t" style="left:4px;top:5.19px;font-size:11px;line-height:11px;letter-spacing:0.15px;color:#8a8a8a">_APD-12</div></div>
<svg class="a" style="left:196px;top:495px" width="12" height="7.4"><polyline points="0.5,0.5 6.0,6.4 11.5,0.5" fill="none" stroke="#777" stroke-width="1.1"/></svg>
<div class="t" style="left:29.5px;top:518.19px;font-size:11px;line-height:11px;color:#2b2b2b;font-weight:400;letter-spacing:0.15px;">D&eacute;bord</div>
<div class="a" style="left:129px;top:512px;width:84px;height:21px;background:#FFFFFF;border:1px solid #8E8E8E;"></div>
<div class="t" style="right:796.6px;text-align:right;top:517.69px;font-size:11px;line-height:11px;color:#2b2b2b;font-weight:400;letter-spacing:0.4px;">40.0</div>
<div class="a" style="left:225px;top:470px;width:216px;height:89px;background:#FFFFFF;border:1px solid #E9E9E9;"></div>
<div class="t" style="left:228.3px;top:474.09px;font-size:11px;line-height:11px;color:#2b2b2b;font-weight:400;letter-spacing:0.15px;">Chant e<u>x</u>tr&eacute;mit&eacute;</div>
<div class="a" style="left:233px;top:488px;width:12px;height:12px;box-sizing:border-box;border:1px solid #222;border-radius:50%;background:#fff"></div>
<div class="t" style="left:248.6px;top:489.19px;font-size:11px;line-height:11px;color:#2b2b2b;font-weight:400;letter-spacing:0.15px;">Droit</div>
<div class="a" style="left:233px;top:509px;width:12px;height:12px;box-sizing:border-box;border:1px solid #E2A93A;border-radius:50%;background:#fff"></div>
<div class="a" style="left:236px;top:512px;width:6px;height:6px;border-radius:50%;background:#E2A93A"></div>
<div class="t" style="left:248.6px;top:510.19px;font-size:11px;line-height:11px;color:#2b2b2b;font-weight:400;letter-spacing:0.15px;">Comme le chant</div>
<div class="t" style="left:233.3px;top:539.19px;font-size:11px;line-height:11px;color:#2b2b2b;font-weight:400;letter-spacing:0.15px;">D&eacute;bord</div>
<div class="a" style="left:369px;top:533px;width:66px;height:21px;background:#FFFFFF;border:1px solid #8E8E8E;"></div>
<div class="t" style="right:574.6px;text-align:right;top:538.69px;font-size:11px;line-height:11px;color:#2b2b2b;font-weight:400;letter-spacing:0.4px;">20.0</div>
<div class="a" style="left:449px;top:470px;width:180px;height:89px;background:#FFFFFF;border:1px solid #E9E9E9;"></div>
<div class="t" style="left:452.5px;top:473.79px;font-size:11px;line-height:11px;color:#2b2b2b;font-weight:400;letter-spacing:0.15px;">Dosseret</div>
<div class="a" style="left:458px;top:490px;width:159px;height:21px;background:#EFEFEF;border:1px solid #BDBDBD;"></div>
<div class="a" style="left:459px;top:491px;width:140px;height:19px;overflow:hidden">
<div class="t" style="left:4px;top:5.19px;font-size:11px;line-height:11px;letter-spacing:0.15px;color:#8a8a8a">_KEIN-WAP</div></div>
<svg class="a" style="left:601px;top:497px" width="12" height="7.4"><polyline points="0.5,0.5 6.0,6.4 11.5,0.5" fill="none" stroke="#777" stroke-width="1.1"/></svg>
<div class="a" style="left:458px;top:516px;width:12px;height:12px;background:#FFFFFF;border:1px solid #333;"></div>
<div class="t" style="left:473.4px;top:517.19px;font-size:11px;line-height:11px;color:#2b2b2b;font-weight:400;letter-spacing:0.15px;">Contre armoire</div>
<div class="a" style="left:458px;top:535px;width:12px;height:12px;background:#2B2B2B;"></div>
<svg class="a" style="left:458px;top:535px" width="12" height="12"><polyline points="2.2,6.2 4.8,8.8 9.8,2.8" fill="none" stroke="#fff" stroke-width="1.8"/></svg>
<div class="t" style="left:473.4px;top:536.19px;font-size:11px;line-height:11px;color:#2b2b2b;font-weight:400;letter-spacing:0.15px;">C&ocirc;t&eacute;s terminaux contre le...</div>
<div class="a" style="left:12px;top:563px;width:972px;height:96px;background:#FFFFFF;border:1px solid #E9E9E9;"></div>
<div class="t" style="left:15.6px;top:567.19px;font-size:11px;line-height:11px;color:#2b2b2b;font-weight:400;letter-spacing:0.15px;">Poign&eacute;es</div>
<div class="a" style="left:104px;top:579px;width:236px;height:21px;background:#EFEFEF;border:1px solid #BDBDBD;"></div>
<div class="a" style="left:105px;top:580px;width:217px;height:19px;overflow:hidden">
<div class="t" style="left:4px;top:5.19px;font-size:11px;line-height:11px;letter-spacing:0.15px;color:#555">WINNER 0000-3 EN Demo</div></div>
<svg class="a" style="left:324px;top:586px" width="12" height="7.4"><polyline points="0.5,0.5 6.0,6.4 11.5,0.5" fill="none" stroke="#777" stroke-width="1.1"/></svg>
<div class="a" style="left:342px;top:579px;width:12px;height:12px;background:#ADADAD;"></div>
<svg class="a" style="left:342px;top:579px" width="12" height="12"><polyline points="2.2,6.2 4.8,8.8 9.8,2.8" fill="none" stroke="#fff" stroke-width="1.8"/></svg>
<div class="t" style="left:357.2px;top:579.79px;font-size:11px;line-height:11px;color:#A0A0A0;font-weight:400;letter-spacing:0.08px;">Placer &agrave; l'horizontal sur les portes</div>
<div class="a" style="left:647px;top:579px;width:12px;height:12px;background:#ADADAD;"></div>
<svg class="a" style="left:647px;top:579px" width="12" height="12"><polyline points="2.2,6.2 4.8,8.8 9.8,2.8" fill="none" stroke="#fff" stroke-width="1.8"/></svg>
<div class="t" style="left:662.5px;top:579.79px;font-size:11px;line-height:11px;color:#A0A0A0;font-weight:400;letter-spacing:0.08px;">Placer &agrave; l'horizontal sur les tiroirs</div>
<div class="t" style="left:21.3px;top:611.79px;font-size:11px;line-height:11px;color:#2b2b2b;font-weight:400;letter-spacing:0.15px;">Porte :</div>
<div class="a" style="left:104px;top:605px;width:236px;height:21px;background:#EFEFEF;border:1px solid #BDBDBD;"></div>
<div class="a" style="left:105px;top:606px;width:217px;height:19px;overflow:hidden">
<div class="t" style="left:4px;top:5.19px;font-size:11px;line-height:11px;letter-spacing:0.15px;color:#555">201 Stainless steel look knob, metal</div></div>
<svg class="a" style="left:324px;top:612px" width="12" height="7.4"><polyline points="0.5,0.5 6.0,6.4 11.5,0.5" fill="none" stroke="#777" stroke-width="1.1"/></svg>
<div class="a" style="left:342px;top:605px;width:27px;height:21px;background:#EFEFEF;"></div>
<div class="t" style="left:55.5px;width:600px;text-align:center;top:609.69px;font-size:11px;line-height:11px;color:#9a9a9a;font-weight:400;letter-spacing:0.15px;">...</div>
<div class="a" style="left:372px;top:605px;width:27px;height:21px;background:#CCCCCC;"></div>
<svg class="a" style="left:378px;top:608px" width="14" height="14" viewBox="0 0 14 14">
<rect x="0.5" y="0.5" width="4.5" height="13" fill="#eef0f2" stroke="#1a1a1a"/>
<rect x="2.2" y="10.6" width="1.2" height="1.2" fill="#a03030"/>
<polygon points="10,1.5 13,4.8 7.5,10.3 4.5,7" fill="#eef0f2" stroke="#1a1a1a"/>
<line x1="7.25" y1="4.25" x2="10.25" y2="7.55" stroke="#1a1a1a"/>
<rect x="5" y="9.5" width="8.5" height="4" fill="#eef0f2" stroke="#1a1a1a"/>
<line x1="8" y1="9.5" x2="8" y2="13.5" stroke="#1a1a1a"/>
<line x1="11" y1="9.5" x2="11" y2="13.5" stroke="#1a1a1a"/>
</svg>
<div class="t" style="left:21.3px;top:636.99px;font-size:11px;line-height:11px;color:#2b2b2b;font-weight:400;letter-spacing:0.15px;">Tiroir :</div>
<div class="a" style="left:104px;top:631px;width:236px;height:21px;background:#EFEFEF;border:1px solid #BDBDBD;"></div>
<div class="a" style="left:105px;top:632px;width:217px;height:19px;overflow:hidden">
<div class="t" style="left:4px;top:5.19px;font-size:11px;line-height:11px;letter-spacing:0.15px;color:#555">Comme la porte</div></div>
<svg class="a" style="left:324px;top:638px" width="12" height="7.4"><polyline points="0.5,0.5 6.0,6.4 11.5,0.5" fill="none" stroke="#777" stroke-width="1.1"/></svg>
<div class="a" style="left:342px;top:631px;width:27px;height:21px;background:#EFEFEF;"></div>
<div class="t" style="left:55.5px;width:600px;text-align:center;top:635.69px;font-size:11px;line-height:11px;color:#9a9a9a;font-weight:400;letter-spacing:0.15px;">...</div>
<div class="a" style="left:372px;top:631px;width:27px;height:21px;background:#EFEFEF;"></div>
<svg class="a" style="left:378px;top:634px" width="14" height="14" viewBox="0 0 14 14">
<rect x="0.5" y="0.5" width="4.5" height="13" fill="#f4f4f4" stroke="#b4b4b4"/>
<rect x="2.2" y="10.6" width="1.2" height="1.2" fill="#c8a0a0"/>
<polygon points="10,1.5 13,4.8 7.5,10.3 4.5,7" fill="#f4f4f4" stroke="#b4b4b4"/>
<line x1="7.25" y1="4.25" x2="10.25" y2="7.55" stroke="#b4b4b4"/>
<rect x="5" y="9.5" width="8.5" height="4" fill="#f4f4f4" stroke="#b4b4b4"/>
<line x1="8" y1="9.5" x2="8" y2="13.5" stroke="#b4b4b4"/>
<line x1="11" y1="9.5" x2="11" y2="13.5" stroke="#b4b4b4"/>
</svg>
<div class="t" style="left:570.3px;top:611.89px;font-size:11px;line-height:11px;color:#2b2b2b;font-weight:400;letter-spacing:0.15px;">Vitr&eacute;e :</div>
<div class="a" style="left:644px;top:605px;width:273px;height:21px;background:#EFEFEF;border:1px solid #BDBDBD;"></div>
<div class="a" style="left:645px;top:606px;width:254px;height:19px;overflow:hidden">
<div class="t" style="left:4px;top:5.19px;font-size:11px;line-height:11px;letter-spacing:0.15px;color:#555">Comme la porte</div></div>
<svg class="a" style="left:901px;top:612px" width="12" height="7.4"><polyline points="0.5,0.5 6.0,6.4 11.5,0.5" fill="none" stroke="#777" stroke-width="1.1"/></svg>
<div class="a" style="left:920px;top:605px;width:27px;height:21px;background:#EFEFEF;"></div>
<div class="t" style="left:633.5px;width:600px;text-align:center;top:609.69px;font-size:11px;line-height:11px;color:#9a9a9a;font-weight:400;letter-spacing:0.15px;">...</div>
<div class="a" style="left:950px;top:605px;width:27px;height:21px;background:#EFEFEF;"></div>
<svg class="a" style="left:956px;top:608px" width="14" height="14" viewBox="0 0 14 14">
<rect x="0.5" y="0.5" width="4.5" height="13" fill="#f4f4f4" stroke="#b4b4b4"/>
<rect x="2.2" y="10.6" width="1.2" height="1.2" fill="#c8a0a0"/>
<polygon points="10,1.5 13,4.8 7.5,10.3 4.5,7" fill="#f4f4f4" stroke="#b4b4b4"/>
<line x1="7.25" y1="4.25" x2="10.25" y2="7.55" stroke="#b4b4b4"/>
<rect x="5" y="9.5" width="8.5" height="4" fill="#f4f4f4" stroke="#b4b4b4"/>
<line x1="8" y1="9.5" x2="8" y2="13.5" stroke="#b4b4b4"/>
<line x1="11" y1="9.5" x2="11" y2="13.5" stroke="#b4b4b4"/>
</svg>
<div class="t" style="left:570.3px;top:636.99px;font-size:11px;line-height:11px;color:#2b2b2b;font-weight:400;letter-spacing:0.15px;">Petit :</div>
<div class="a" style="left:644px;top:631px;width:273px;height:21px;background:#EFEFEF;border:1px solid #BDBDBD;"></div>
<div class="a" style="left:645px;top:632px;width:254px;height:19px;overflow:hidden">
<div class="t" style="left:4px;top:5.19px;font-size:11px;line-height:11px;letter-spacing:0.15px;color:#555">Comme le tiroir</div></div>
<svg class="a" style="left:901px;top:638px" width="12" height="7.4"><polyline points="0.5,0.5 6.0,6.4 11.5,0.5" fill="none" stroke="#777" stroke-width="1.1"/></svg>
<div class="a" style="left:920px;top:631px;width:27px;height:21px;background:#EFEFEF;"></div>
<div class="t" style="left:633.5px;width:600px;text-align:center;top:635.69px;font-size:11px;line-height:11px;color:#9a9a9a;font-weight:400;letter-spacing:0.15px;">...</div>
<div class="a" style="left:950px;top:631px;width:27px;height:21px;background:#EFEFEF;"></div>
<svg class="a" style="left:956px;top:634px" width="14" height="14" viewBox="0 0 14 14">
<rect x="0.5" y="0.5" width="4.5" height="13" fill="#f4f4f4" stroke="#b4b4b4"/>
<rect x="2.2" y="10.6" width="1.2" height="1.2" fill="#c8a0a0"/>
<polygon points="10,1.5 13,4.8 7.5,10.3 4.5,7" fill="#f4f4f4" stroke="#b4b4b4"/>
<line x1="7.25" y1="4.25" x2="10.25" y2="7.55" stroke="#b4b4b4"/>
<rect x="5" y="9.5" width="8.5" height="4" fill="#f4f4f4" stroke="#b4b4b4"/>
<line x1="8" y1="9.5" x2="8" y2="13.5" stroke="#b4b4b4"/>
<line x1="11" y1="9.5" x2="11" y2="13.5" stroke="#b4b4b4"/>
</svg>
<div class="a" style="left:12px;top:662px;width:474px;height:60px;background:#FFFFFF;border:1px solid #E9E9E9;"></div>
<div class="t" style="left:15.4px;top:664.99px;font-size:11px;line-height:11px;color:#2b2b2b;font-weight:400;letter-spacing:0.15px;">Cr&eacute;dence</div>
<div class="a" style="left:20px;top:679px;width:12px;height:12px;background:#ADADAD;"></div>
<svg class="a" style="left:20px;top:679px" width="12" height="12"><polyline points="2.2,6.2 4.8,8.8 9.8,2.8" fill="none" stroke="#fff" stroke-width="1.8"/></svg>
<div class="t" style="left:35.3px;top:680.19px;font-size:11px;line-height:11px;color:#A0A0A0;font-weight:400;letter-spacing:0.15px;">Affichage automatique</div>
<div class="t" style="left:20.4px;top:704.79px;font-size:11px;line-height:11px;color:#2b2b2b;font-weight:400;letter-spacing:0.15px;">Positionnem...</div>
<div class="a" style="left:104px;top:698px;width:245px;height:21px;background:#EFEFEF;border:1px solid #BDBDBD;"></div>
<div class="a" style="left:105px;top:699px;width:226px;height:19px;overflow:hidden">
<div class="t" style="left:4px;top:5.19px;font-size:11px;line-height:11px;letter-spacing:0.15px;color:#666">1500.0 Sous l'&eacute;l&eacute;ment haut</div></div>
<svg class="a" style="left:333px;top:705px" width="12" height="7.4"><polyline points="0.5,0.5 6.0,6.4 11.5,0.5" fill="none" stroke="#777" stroke-width="1.1"/></svg>
<div class="a" style="left:354px;top:698px;width:95px;height:21px;background:#EFEFEF;border:1px solid #ABABAB;"></div>
<div class="a" style="left:355px;top:699px;width:93px;height:19px;overflow:hidden">
<div class="t" style="left:4px;top:5.19px;font-size:11px;line-height:11px;letter-spacing:0.15px;color:#808080">1500.0</div></div>
<div class="a" style="left:453px;top:698px;width:27px;height:21px;background:#CCCCCC;"></div>
<svg class="a" style="left:459px;top:701px" width="14" height="14" viewBox="0 0 14 14">
<rect x="0.5" y="0.5" width="4.5" height="13" fill="#eef0f2" stroke="#1a1a1a"/>
<rect x="2.2" y="10.6" width="1.2" height="1.2" fill="#a03030"/>
<polygon points="10,1.5 13,4.8 7.5,10.3 4.5,7" fill="#eef0f2" stroke="#1a1a1a"/>
<line x1="7.25" y1="4.25" x2="10.25" y2="7.55" stroke="#1a1a1a"/>
<rect x="5" y="9.5" width="8.5" height="4" fill="#eef0f2" stroke="#1a1a1a"/>
<line x1="8" y1="9.5" x2="8" y2="13.5" stroke="#1a1a1a"/>
<line x1="11" y1="9.5" x2="11" y2="13.5" stroke="#1a1a1a"/>
</svg>
<div class="a" style="left:513px;top:687px;width:146px;height:25px;background:#CCCCCC;"></div>
<div class="t" style="left:286.0px;width:600px;text-align:center;top:693.69px;font-size:11px;line-height:11px;color:#2b2b2b;font-weight:400;letter-spacing:0.15px;">Dimensions...</div>
<div class="a" style="left:734px;top:687px;width:81px;height:25px;background:#F3BD49;"></div>
<div class="t" style="left:474.5px;width:600px;text-align:center;top:693.69px;font-size:11px;line-height:11px;color:#2b2b2b;font-weight:400;letter-spacing:0.15px;">OK</div>
<div class="a" style="left:818px;top:687px;width:81px;height:25px;background:#CCCCCC;"></div>
<div class="t" style="left:558.5px;width:600px;text-align:center;top:693.69px;font-size:11px;line-height:11px;color:#2b2b2b;font-weight:400;letter-spacing:0.15px;">Annuler</div>
<div class="a" style="left:903px;top:687px;width:81px;height:25px;background:#CCCCCC;"></div>
<div class="t" style="left:643.5px;width:600px;text-align:center;top:693.69px;font-size:11px;line-height:11px;color:#2b2b2b;font-weight:400;letter-spacing:0.15px;">Aide</div>
</body></html>
